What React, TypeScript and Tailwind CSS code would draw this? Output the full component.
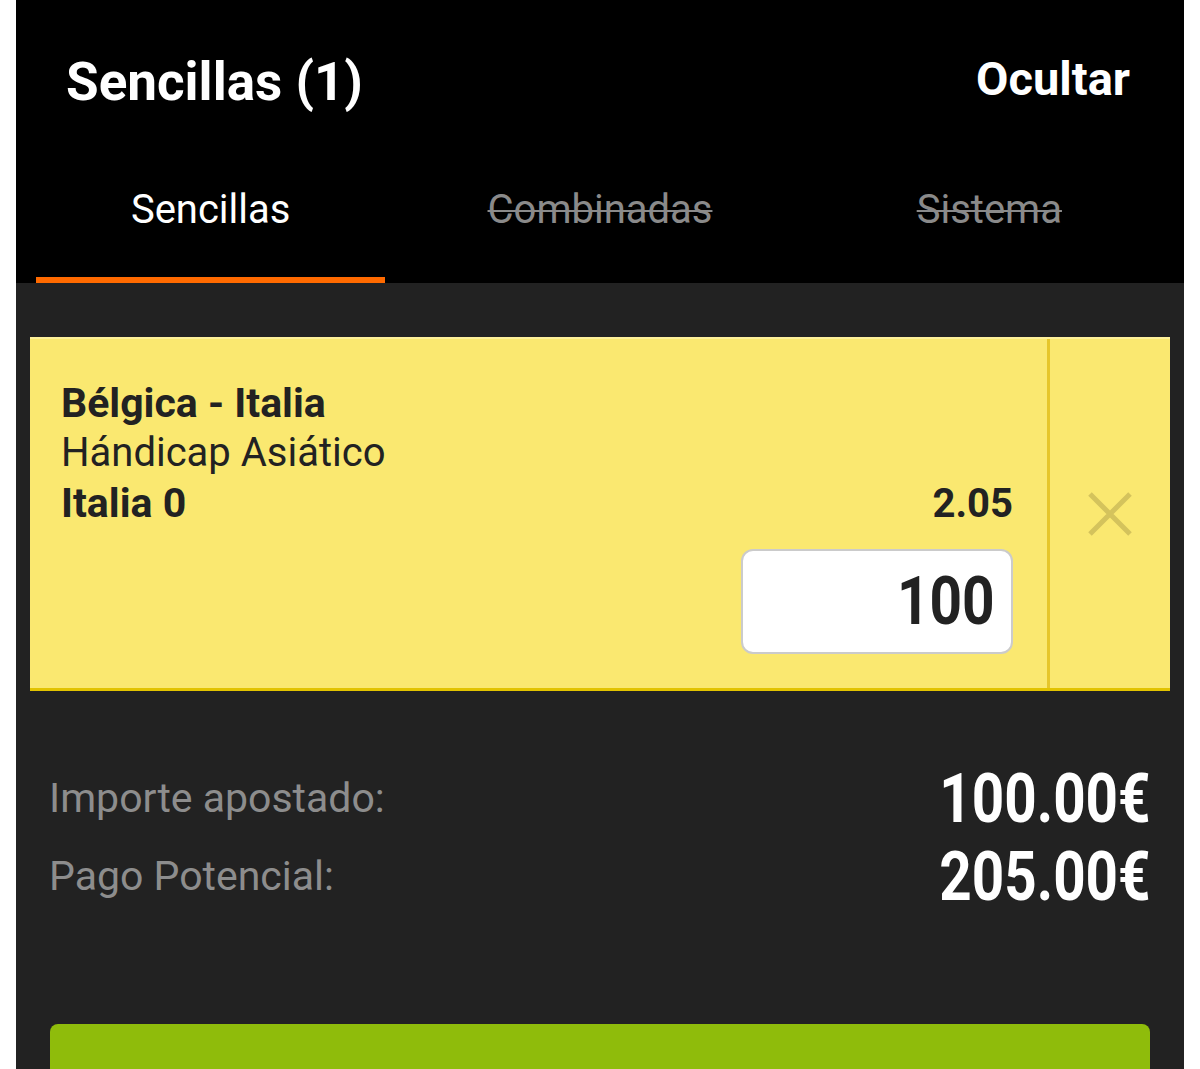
// close cross for the bet row
function CloseIcon() {
  return (
    <svg width="44" height="44" viewBox="0 0 44 44" fill="none" stroke="#d4c35c" strokeWidth="5">
      <path d="M2 2 L42 42 M42 2 L2 42" />
    </svg>
  )
}

function Tab({ label, active, disabled }: { label: string; active?: boolean; disabled?: boolean }) {
  return (
    <div className="flex flex-col items-center h-[143px]">
      <span
        className={`mt-[48px] text-[40px] leading-[44px] ${
          disabled ? "text-[#8a8a8a] line-through decoration-2" : "text-white"
        }`}
      >
        {label}
      </span>
      <div className={`mt-auto h-[6px] self-stretch mx-5 ${active ? "bg-[#ff6a00]" : ""}`} />
    </div>
  )
}

export default function App() {
  return (
    <div className="h-[1069px] overflow-hidden bg-white font-[Roboto,sans-serif]">
      <div className="mx-4 h-full bg-[#222222]">
        <div className="bg-black">
          <div className="flex justify-between h-[140px] pl-[50px] pr-[54px]">
            <h1 className="pt-[52px] text-[53px] leading-[60px] font-bold text-white">Sencillas (1)</h1>
            <button className="self-start pt-[51px] text-[47px] leading-[56px] font-bold text-white">Ocultar</button>
          </div>
          <div className="grid grid-cols-3">
            <Tab label="Sencillas" active />
            <Tab label="Combinadas" disabled />
            <Tab label="Sistema" disabled />
          </div>
        </div>

        <div className="pt-[54px] px-[14px]">
          <div className="flex bg-[#fae870] border-t-2 border-[#fdf09a] border-b-[3px] border-b-[#e2c300]">
            <div className="flex-1 flex flex-col pl-[31px] pr-[34px] pt-[39px] pb-[34px] text-[#222222]">
              <div className="text-[41px] leading-[50px] font-bold">Bélgica - Italia</div>
              <div className="text-[40px] leading-[50px]">Hándicap Asiático</div>
              <div className="flex justify-between items-baseline">
                <span className="text-[41px] leading-[50px] font-bold">Italia 0</span>
                <span className="text-[40px] leading-[50px] font-bold">2.05</span>
              </div>
              <div className="mt-[20px] self-end w-[272px] h-[105px] bg-white border-2 border-[#cbcbcb] rounded-xl flex items-center justify-end pr-4">
                <span className="inline-block text-[66px] leading-[76px] font-bold scale-x-[0.86] origin-right">100</span>
              </div>
            </div>
            <div className="w-[123px] border-l-[3px] border-l-[#e6c62a] flex items-center justify-center">
              <CloseIcon />
            </div>
          </div>
        </div>

        <div className="mt-[69px] pl-[33px] pr-[33px]">
          <div className="flex justify-between items-center h-[78px]">
            <span className="text-[41px] text-[#8d8d8d]">Importe apostado:</span>
            <span className="inline-block text-[69px] leading-[78px] font-bold text-white scale-x-[0.82] origin-right">100.00€</span>
          </div>
          <div className="flex justify-between items-center h-[78px]">
            <span className="text-[41px] text-[#8d8d8d]">Pago Potencial:</span>
            <span className="inline-block text-[69px] leading-[78px] font-bold text-white scale-x-[0.82] origin-right">205.00€</span>
          </div>
        </div>

        <div className="mt-[108px] mx-[34px] h-[120px] rounded-lg bg-[#8fbc0b]" />
      </div>
    </div>
  )
}
